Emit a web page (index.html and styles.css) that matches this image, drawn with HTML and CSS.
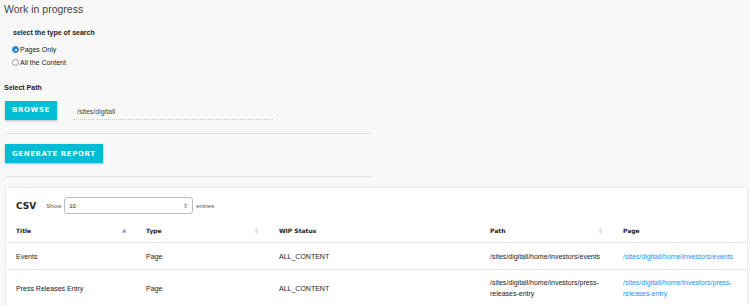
FILE: index.html
```html
<!DOCTYPE html>
<html lang="en">
<head>
    <meta charset="UTF-8">
    <title>Work in progress</title>
    <link rel="stylesheet" href="styles.css">
</head>
<body>
    <h1 class="page-title">Work in progress</h1>

    <div class="search-type">
        <h4>select the type of search</h4>
        <label class="radio"><span class="dot checked"></span>Pages Only</label>
        <label class="radio"><span class="dot"></span>All the Content</label>
    </div>

    <div class="path">
        <h4>Select Path</h4>
        <div class="path-row">
            <button class="btn">BROWSE</button>
            <div class="path-input">/sites/digitall</div>
        </div>
    </div>

    <hr class="sep">
    <button class="btn">GENERATE REPORT</button>
    <hr class="sep">

    <div class="card">
        <div class="card-top">
            <span class="csv">CSV</span>
            <span class="show">Show</span>
            <div class="select">10<span class="arrows">&#8661;</span></div>
            <span class="show">entries</span>
        </div>
        <table class="report">
            <thead>
                <tr>
                    <th class="c1">Title <span class="sort up">&#9650;</span></th>
                    <th class="c2">Type <span class="sort">&#8661;</span></th>
                    <th class="c3">WIP Status</th>
                    <th class="c4">Path <span class="sort">&#8661;</span></th>
                    <th class="c5">Page</th>
                </tr>
            </thead>
            <tbody>
                <tr>
                    <td>Events</td>
                    <td>Page</td>
                    <td>ALL_CONTENT</td>
                    <td>/sites/digitall/home/investors/events</td>
                    <td><a href="#">/sites/digitall/home/investors/events</a></td>
                </tr>
                <tr>
                    <td>Press Releases Entry</td>
                    <td>Page</td>
                    <td>ALL_CONTENT</td>
                    <td>/sites/digitall/home/investors/press-releases-entry</td>
                    <td><a href="#">/sites/digitall/home/investors/press-releases-entry</a></td>
                </tr>
            </tbody>
        </table>
    </div>
</body>
</html>
```

FILE: styles.css
```css
body {
    margin: 0;
    padding: 0 2px 0 5px;
    background: #f8f8f8;
    font-family: "Liberation Sans", Arial, sans-serif;
    color: #222;
}
h4 {
    margin: 0;
    font-size: 7px;
    font-weight: bold;
}
.page-title {
    margin: 2px 0 0 -1px;
    font-size: 10.5px;
    font-weight: normal;
    color: #444;
    line-height: 14px;
}
.search-type {
    padding: 13px 0 0 8px;
}
.search-type h4 {
    margin-bottom: 7px;
}
.radio {
    display: flex;
    align-items: center;
    font-size: 7px;
    height: 13px;
    margin-left: -1px;
}
.dot {
    width: 7px;
    height: 7px;
    border-radius: 50%;
    border: 1px solid #999;
    background: #fff;
    margin-right: 1px;
    box-sizing: border-box;
    position: relative;
}
.dot.checked {
    border-color: #1e88e5;
    background: #1e88e5;
}
.dot.checked:after {
    content: '';
    position: absolute;
    left: 2px;
    top: 2px;
    width: 2px;
    height: 2px;
    border-radius: 50%;
    background: #fff;
}
.path {
    padding-top: 15px;
}
.path h4 {
    margin-left: -1px;
    margin-bottom: 9px;
}
.path-row {
    display: flex;
    align-items: center;
}
.btn {
    background: #00bcd4;
    color: #fff;
    border: none;
    font-family: "DejaVu Sans", sans-serif;
    font-weight: bold;
    font-size: 7px;
    letter-spacing: 0.6px;
    height: 19px;
    padding: 0 7px;
    box-shadow: 0 1px 2px rgba(0,0,0,0.25);
    display: block;
}
.path-row .btn {
    width: 52px;
}
.path-input {
    margin-left: 16px;
    width: 192px;
    font-size: 7px;
    color: #444;
    padding: 4px 4px 4px;
    border-bottom: 1px dotted #ccc;
    margin-top: 4px;
}
.sep {
    border: none;
    border-top: 1px solid #e4e4e4;
    width: 367px;
    margin: 13px 0 10px 0;
}
.card {
    background: #fff;
    border: 1px solid #ececec;
    margin-top: 0;
    padding: 8px 0 0;
}
.card-top {
    display: flex;
    align-items: center;
    padding: 0 10px;
    height: 19px;
}
.csv {
    font-family: "DejaVu Sans", sans-serif;
    font-weight: bold;
    font-size: 9px;
    margin-right: 10px;
}
.show {
    font-size: 6px;
    color: #555;
}
.select {
    width: 129px;
    height: 17px;
    border: 1px solid #bbb;
    border-radius: 3px;
    margin: 0 3px;
    font-size: 6px;
    box-sizing: border-box;
    padding: 0 4px;
    display: flex;
    align-items: center;
    justify-content: space-between;
}
.arrows {
    font-size: 6px;
    color: #777;
}
.report {
    width: 100%;
    border-collapse: collapse;
    margin-top: 4px;
    font-size: 7px;
}
.report th {
    text-align: left;
    font-family: "DejaVu Sans", sans-serif;
    font-size: 6px;
    font-weight: bold;
    padding: 0 10px;
    height: 23px;
    border-bottom: 1px solid #e8e8e8;
}
.report td {
    padding: 0 10px;
    height: 26px;
    border-bottom: 1px solid #e8e8e8;
    line-height: 11px;
}
.report tbody tr:last-child td {
    height: 36px;
}
.c1 { width: 110px; }
.c2 { width: 113px; }
.c3 { width: 191px; }
.c4 { width: 113px; }
.sort {
    float: right;
    font-size: 6px;
    color: #ccc;
}
.sort.up {
    color: #7b86d8;
    font-size: 5px;
}
.report a {
    color: #1e90ff;
    text-decoration: none;
}
```
